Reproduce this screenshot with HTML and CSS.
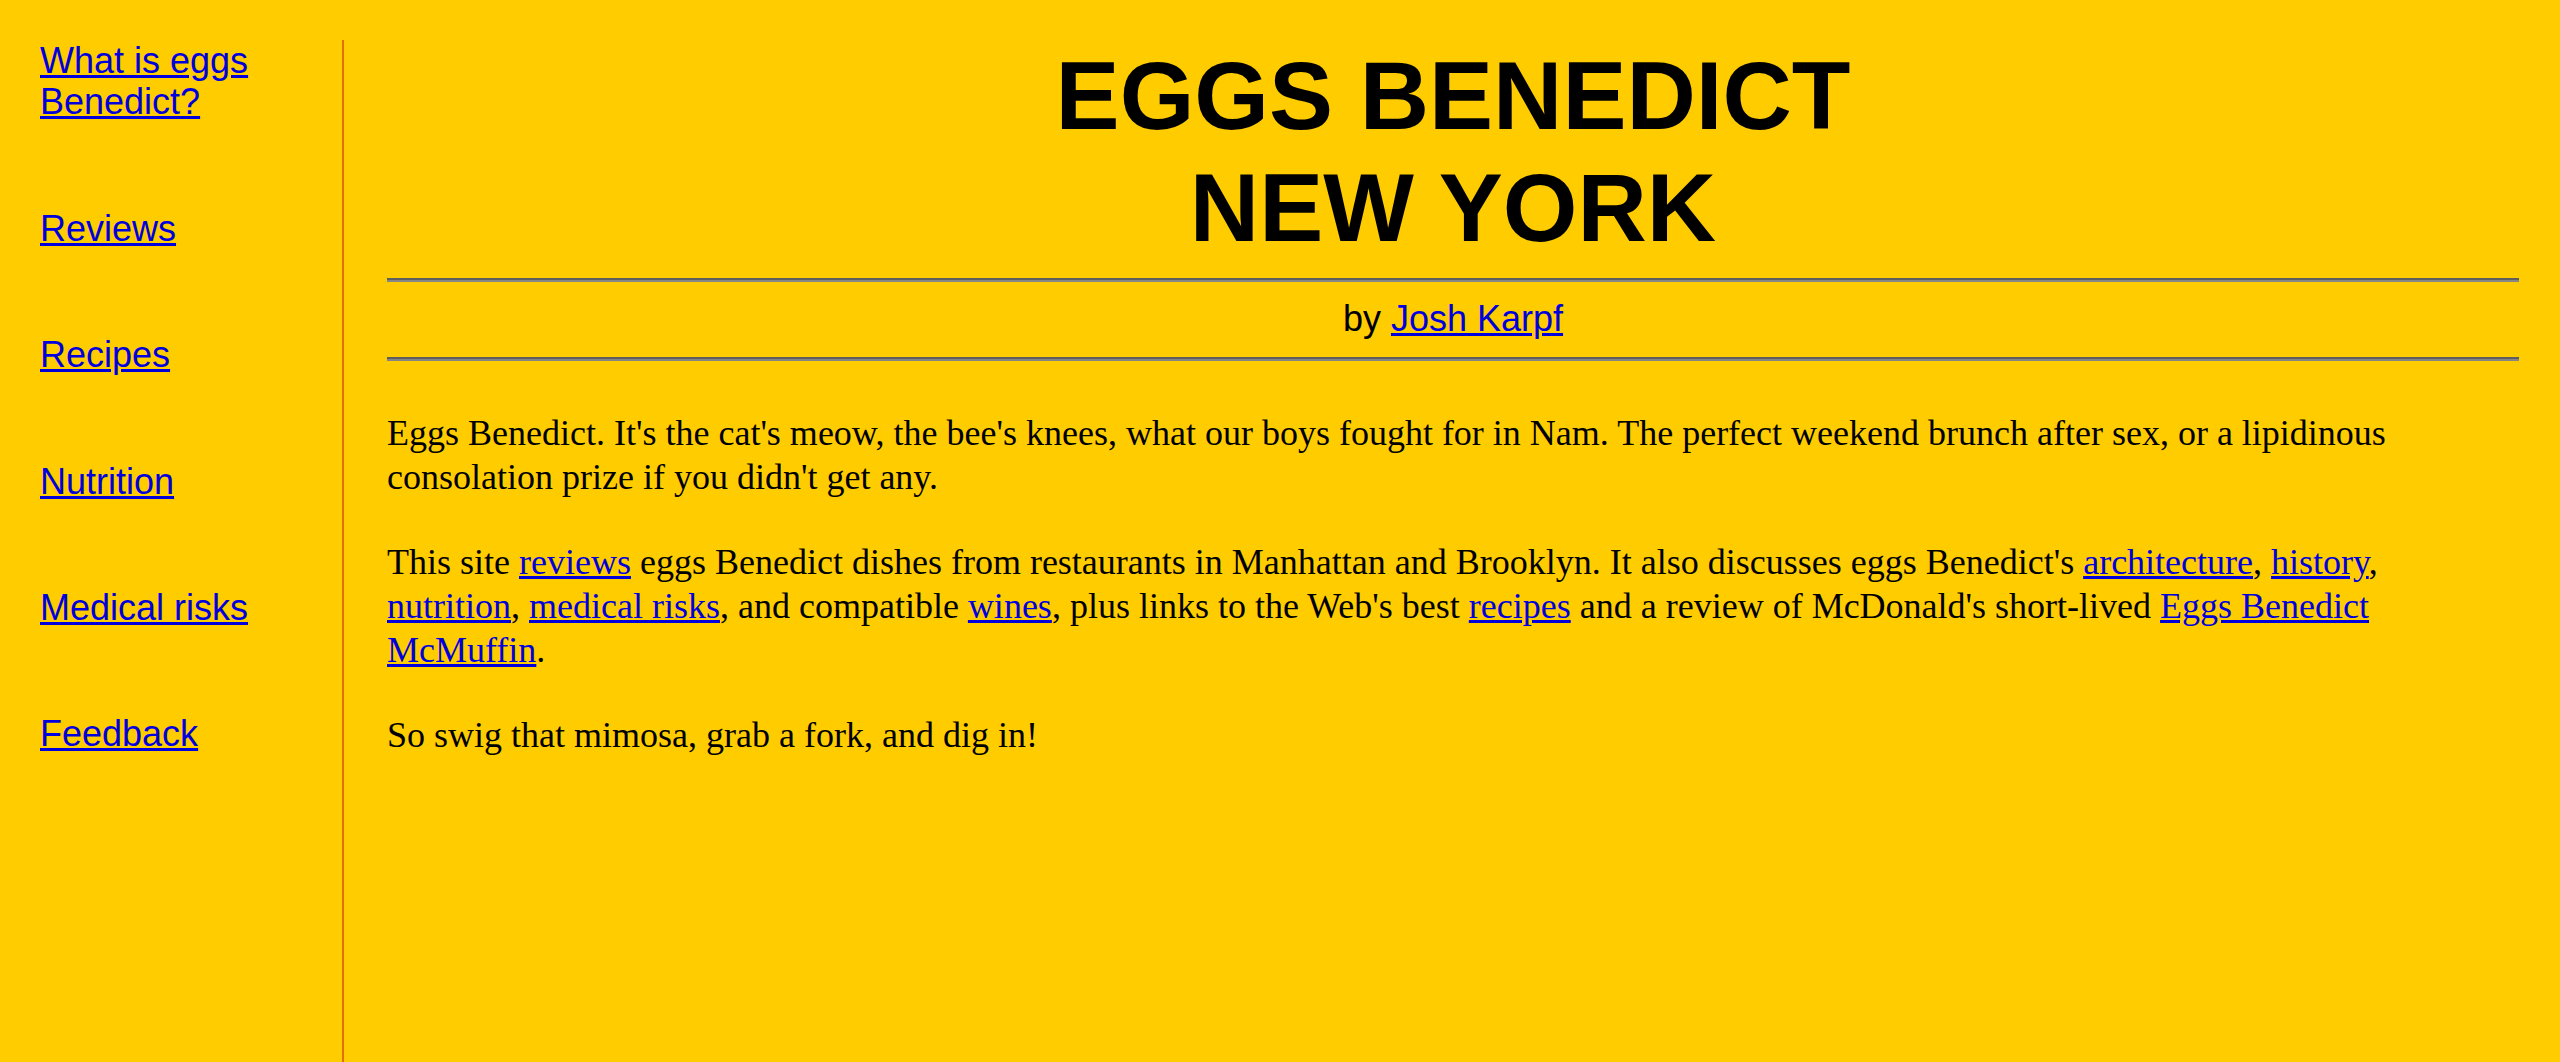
FILE: index.html
```html
<!DOCTYPE html>
<html lang="en">
<head>
<meta charset="utf-8">
<title>Eggs Benedict New York</title>
<link rel="stylesheet" href="styles.css">
</head>
<body>
<div class="page">
  <nav class="sidebar">
    <a href="#">What is eggs Benedict?</a>
    <a href="#">Reviews</a>
    <a href="#">Recipes</a>
    <a href="#">Nutrition</a>
    <a href="#">Medical risks</a>
    <a href="#">Feedback</a>
  </nav>
  <main class="content">
    <h1 class="title">EGGS BENEDICT<br>NEW YORK</h1>
    <hr class="rule">
    <div class="byline">by <a href="#">Josh Karpf</a></div>
    <hr class="rule">
    <div class="intro">
      <p>Eggs Benedict. It's the cat's meow, the bee's knees, what our boys fought for in Nam. The perfect weekend brunch after sex, or a lipidinous consolation prize if you didn't get any.</p>
      <p>This site <a href="#">reviews</a> eggs Benedict dishes from restaurants in Manhattan and Brooklyn. It also discusses eggs Benedict's <a href="#">architecture</a>, <a href="#">history</a>, <a href="#">nutrition</a>, <a href="#">medical risks</a>, and compatible <a href="#">wines</a>, plus links to the Web's best <a href="#">recipes</a> and a review of McDonald's short-lived <a href="#">Eggs Benedict McMuffin</a>.</p>
      <p>So swig that mimosa, grab a fork, and dig in!</p>
    </div>
  </main>
</div>
</body>
</html>
```

FILE: styles.css
```css
html, body {
  margin: 0;
  padding: 0;
  background: #ffcc00;
}

body {
  color: #000;
  font-family: "Liberation Serif", "Times New Roman", serif;
}

a {
  color: #0000dd;
}

.page {
  display: flex;
  align-items: stretch;
  min-height: 100vh;
  padding-top: 40px;
  box-sizing: border-box;
}

.sidebar {
  flex: 0 0 auto;
  width: 302px;
  padding-left: 40px;
  border-right: 2px solid #e36f00;
  display: flex;
  flex-direction: column;
  align-items: flex-start;
  gap: 85px;
  font-family: "Liberation Sans", Arial, sans-serif;
  font-size: 36px;
  line-height: 41.4px;
}

.sidebar a {
  max-width: 262px;
}

.content {
  flex: 0 0 auto;
  width: 2132px;
  margin-left: 43px;
}

.title {
  margin: 0 0 15px;
  text-align: center;
  font-family: "Liberation Sans", Arial, sans-serif;
  font-weight: bold;
  font-size: 96px;
  line-height: 111.5px;
}

.rule {
  margin: 0;
  height: 0;
  border: 0;
  border-top: 2px solid #5e5e5e;
  border-bottom: 2px solid #858585;
}

.byline {
  margin: 16px 0 18px;
  text-align: center;
  font-family: "Liberation Sans", Arial, sans-serif;
  font-size: 36px;
  line-height: 41px;
}

.intro {
  padding-top: 50px;
}

.intro p {
  margin: 0 0 41px;
  font-size: 36px;
  line-height: 44px;
}
```
